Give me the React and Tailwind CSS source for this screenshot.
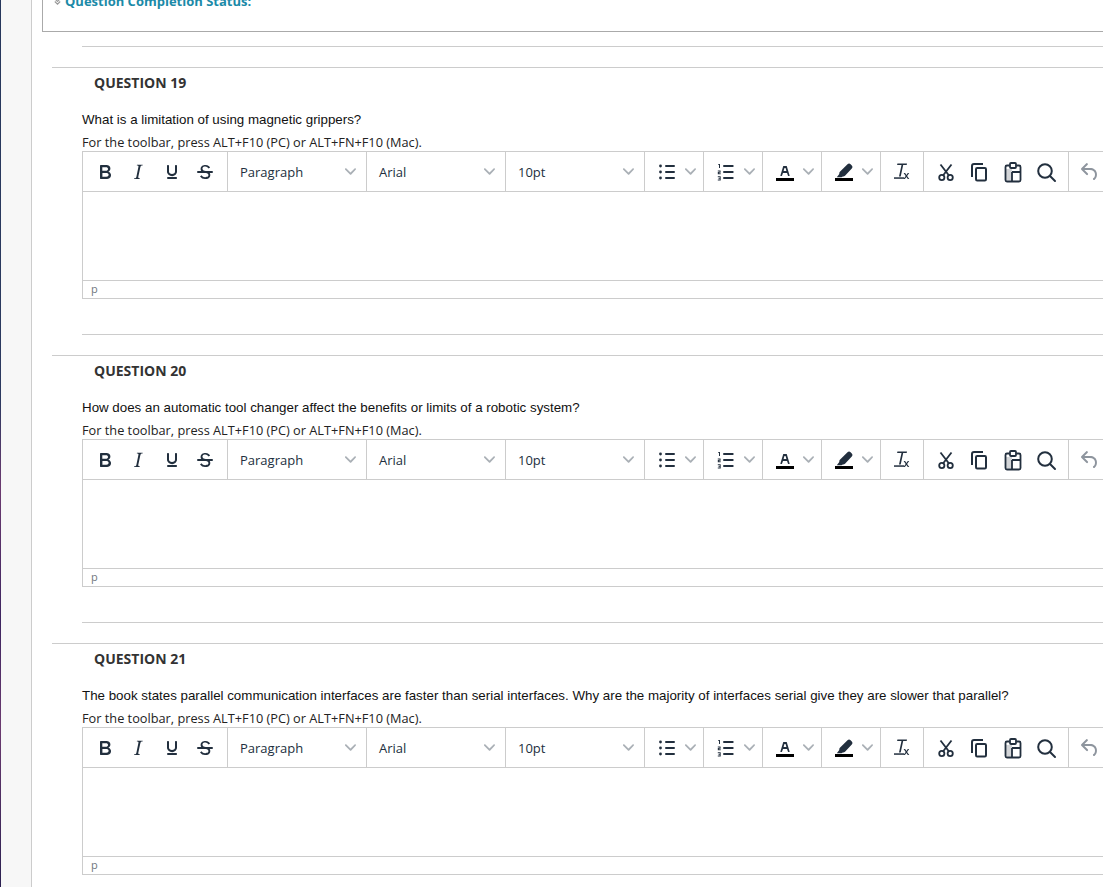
import React from 'react'

const QUESTIONS = [
  { num: 19, text: 'What is a limitation of using magnetic grippers?' },
  { num: 20, text: 'How does an automatic tool changer affect the benefits or limits of a robotic system?' },
  { num: 21, text: 'The book states parallel communication interfaces are faster than serial interfaces. Why are the majority of interfaces serial give they are slower that parallel?' },
]

function Icon({ children, className = 'text-[#222f3e]' }) {
  return (
    <svg viewBox="0 0 24 24" width="24" height="24" fill="currentColor" className={`block shrink-0 ${className}`}>
      {children}
    </svg>
  )
}

function Chevron() {
  return (
    <svg viewBox="0 0 10 10" width="11" height="11" fill="currentColor" className="block shrink-0 text-[#aab0b6]">
      <path d="M8.7 2.2c.3-.3.8-.3 1 0 .4.4.4.9 0 1.2L5.7 7.8c-.3.3-.9.3-1.2 0L.2 3.4a.8.8 0 0 1 0-1.2c.3-.3.8-.3 1.1 0L5 6l3.7-3.8z" />
    </svg>
  )
}

function IconButton({ children }) {
  return <div className="flex w-[33.5px] items-center justify-center">{children}</div>
}

function SelectBox({ label }) {
  return (
    <div className="flex w-[139px] items-center justify-between border-r border-[#ccc] pl-[12px] pr-[10px] text-[13px] text-[#222f3e] [font-family:'Open_Sans',sans-serif]">
      <span className="pt-[2px]">{label}</span>
      <Chevron />
    </div>
  )
}

function SplitButton({ children }) {
  return (
    <div className="flex w-[59px] items-center justify-between border-r border-[#ccc] pl-[9.5px] pr-[7.5px]">
      {children}
      <Chevron />
    </div>
  )
}

function Toolbar() {
  return (
    <div className="flex h-[40px] border-b border-[#ccc]">
      <div className="flex w-[145px] border-r border-[#ccc] pl-[5px]">
        <IconButton>
          <Icon><path d="M7.8 19c-.3 0-.5 0-.6-.2l-.2-.5V5.7c0-.2 0-.4.2-.5l.6-.2h5c1.5 0 2.7.3 3.5 1 .7.6 1.1 1.4 1.1 2.5a3 3 0 0 1-.6 1.9c-.4.6-1 1-1.6 1.2.4.1.9.3 1.3.6s.8.7 1 1.2c.4.4.5 1 .5 1.6 0 1.3-.4 2.3-1.3 3-.8.7-2.1 1-3.8 1H7.8zm5-8.3c.6 0 1.2-.1 1.6-.5.4-.3.6-.7.6-1.3 0-1.1-.8-1.7-2.3-1.7H9.3v3.5h3.4zm.5 6c.7 0 1.3-.1 1.7-.4.4-.4.6-.9.6-1.5s-.2-1-.7-1.4c-.4-.3-1-.4-2-.4H9.4v3.8h4z" /></Icon>
        </IconButton>
        <IconButton>
          <Icon><path d="M16.7 4.7l-.1.9h-.3c-.6 0-1 0-1.4.3-.3.3-.4.6-.5 1.1l-2.1 9.8v.6c0 .5.4.8 1.4.8h.2l-.2.8H8l.2-.8h.2c1.1 0 1.8-.5 2-1.5l2-9.8.1-.5c0-.6-.4-.8-1.4-.8h-.3l.2-.9h5.8z" /></Icon>
        </IconButton>
        <IconButton>
          <Icon><path d="M16 5c.6 0 1 .4 1 1v5.5a4 4 0 0 1-.4 1.8l-1 1.4a5.3 5.3 0 0 1-5.5 1 5 5 0 0 1-1.6-1c-.5-.4-.8-.9-1.1-1.4a4 4 0 0 1-.4-1.8V6c0-.6.4-1 1-1s1 .4 1 1v5.5c0 .3 0 .6.2 1l.6.7a3.3 3.3 0 0 0 2.2.8 3.4 3.4 0 0 0 2.2-.8c.3-.2.4-.5.6-.8l.2-.9V6c0-.6.4-1 1-1zM8 17h8c.6 0 1 .4 1 1s-.4 1-1 1H8a1 1 0 0 1 0-2z" /></Icon>
        </IconButton>
        <IconButton>
          <Icon><path d="M15.6 8.5c-.5-.7-1-1.1-1.3-1.3-.6-.4-1.3-.6-2-.6-2.7 0-2.8 1.7-2.8 2.1 0 1.6 1.8 2 3.2 2.3 4.4.9 4.6 2.8 4.6 3.9 0 1.4-.7 4.1-5 4.1A6.2 6.2 0 0 1 7 16.4l1.5-1.1c.4.6 1.6 2 3.7 2 1.6 0 2.5-.4 3-1.2.4-.8.3-2-.8-2.6-.7-.4-1.6-.7-2.9-1-1-.2-3.9-.8-3.9-3.6C7.6 6 10.3 5 12.4 5c2.9 0 4.2 1.6 4.7 2.4l-1.5 1.1z" /><path d="M5 11h14a1 1 0 0 1 0 2H5a1 1 0 0 1 0-2z" /></Icon>
        </IconButton>
      </div>
      <SelectBox label="Paragraph" />
      <SelectBox label="Arial" />
      <SelectBox label="10pt" />
      <SplitButton>
        <Icon>
          <path d="M11 5h8a1 1 0 0 1 0 2h-8a1 1 0 0 1 0-2zm0 6h8a1 1 0 0 1 0 2h-8a1 1 0 0 1 0-2zm0 6h8a1 1 0 0 1 0 2h-8a1 1 0 0 1 0-2z" />
          <circle cx="5.5" cy="6" r="1.4" /><circle cx="5.5" cy="12" r="1.4" /><circle cx="5.5" cy="18" r="1.4" />
        </Icon>
      </SplitButton>
      <SplitButton>
        <Icon>
          <path d="M10 5h8.700a1 1 0 0 1 0 2H10a1 1 0 0 1 0-2zm0 6h8.700a1 1 0 0 1 0 2H10a1 1 0 0 1 0-2zm0 6h8.700a1 1 0 0 1 0 2H10a1 1 0 0 1 0-2z" />
          <path d="M4.300 4H6v4H5V5h-.7zM3.800 10.500h2.800v2.200H4.900v.6h1.800v.9H3.800v-2.100h1.800v-.7H3.800zM3.800 16.300h2.900v4.200H3.800v-.9h1.900V19H4.500v-.7h1.200v-1.100H3.800z" />
        </Icon>
      </SplitButton>
      <SplitButton>
        <Icon>
          <path d="M3 18h18v3H3z" fill="#000" />
          <path d="M8.7 16h-.8a.5.5 0 0 1-.5-.6l2.7-9c.1-.3.3-.4.5-.4h2.8c.2 0 .4.1.5.4l2.7 9a.5.5 0 0 1-.5.6h-.8a.5.5 0 0 1-.4-.4l-.7-2.2c0-.3-.3-.4-.5-.4h-3.4c-.2 0-.4.1-.5.4l-.7 2.2c0 .3-.2.4-.4.4zm2.6-7.6l-.6 2a.5.5 0 0 0 .5.6h1.6a.5.5 0 0 0 .5-.6l-.6-2c0-.3-.3-.4-.5-.4h-.4c-.2 0-.4.1-.5.4z" />
        </Icon>
      </SplitButton>
      <SplitButton>
        <Icon>
          <path d="M3 18h18v3H3z" fill="#000" />
          <path d="M15.500 4.200a2.200 2.200 0 0 1 3.100 0l1.200 1.200a2.200 2.200 0 0 1 0 3.100l-6.800 7.200c-.6.6-1.400.8-2.200.7l-1.300.9H4.800l2.500-3.400c-.2-.8 0-1.500.6-2.100z" />
        </Icon>
      </SplitButton>
      <div className="flex w-[43px] items-center border-r border-[#ccc] pl-[10px]">
        <Icon>
          <path d="M3 17.300h10v1.500H3z" />
          <path d="M6.400 3.500H16l-.3 1.500h-3.500l-2.500 11.600H8L10.500 5H6.100z" />
          <path d="M12.600 13h1.500l1.300 2 1.400-2h1.400l-2.100 2.900 2.200 3.100h-1.500l-1.400-2.100-1.500 2.100h-1.400l2.200-3.100z" />
        </Icon>
      </div>
      <div className="flex w-[145px] border-r border-[#ccc] pl-[5px]">
        <IconButton>
          <Icon>
            <g fill="none" stroke="currentColor" strokeWidth="1.8">
              <circle cx="7.800" cy="17.500" r="2.600" />
              <circle cx="16.200" cy="17.500" r="2.600" />
              <path d="M9.200 15.300L17.500 4.500M14.800 15.300L6.500 4.500" />
            </g>
          </Icon>
        </IconButton>
        <IconButton>
          <Icon>
            <g fill="none" stroke="currentColor" strokeWidth="2">
              <path d="M16 4H7a2 2 0 0 0-2 2v11" />
              <rect x="9" y="8" width="10" height="12.500" rx="1.200" />
            </g>
          </Icon>
        </IconButton>
        <IconButton>
          <Icon>
            <rect x="5" y="9" width="6" height="11.500" opacity="0.2" />
            <g fill="none" stroke="currentColor" strokeWidth="1.8">
              <path d="M8.500 5.500H6a1.500 1.500 0 0 0-1.500 1.500v13A1.500 1.500 0 0 0 6 21.500h12a1.500 1.500 0 0 0 1.500-1.500V7A1.500 1.500 0 0 0 18 5.500h-2.500" />
              <rect x="9" y="3" width="6" height="5" rx="1" />
              <path d="M11 12h8.500M11 12v9.500" />
            </g>
          </Icon>
        </IconButton>
        <IconButton>
          <Icon>
            <g fill="none" stroke="currentColor" strokeWidth="2">
              <circle cx="11" cy="11" r="6.800" />
              <path d="M16 16L21 21" strokeLinecap="round" />
            </g>
          </Icon>
        </IconButton>
      </div>
      <div className="flex w-[40px] items-center pl-[9px]">
        <Icon className="text-[#8e959e]">
          <path d="M6.400 8H12c3.700 0 6.200 2 6.800 5.100.6 2.700-.4 5.600-2.300 6.800a1 1 0 0 1-1-1.800c1.100-.6 1.800-2.700 1.400-4.600-.5-2.100-2.100-3.500-4.900-3.500H6.400l3.300 3.300a1 1 0 1 1-1.400 1.400l-5-5a1 1 0 0 1 0-1.400l5-5a1 1 0 0 1 1.400 1.400L6.400 8z" />
        </Icon>
      </div>
    </div>
  )
}

function Question({ num, text }) {
  return (
    <section className="ml-[20px] h-[288px] border-t border-[#ccc] pt-[6px]">
      <h3 className="ml-[42px] h-[18px] text-[14px] font-bold leading-[18px] text-[#333] [font-family:'Open_Sans',sans-serif]">
        QUESTION {num}
      </h3>
      <div className="ml-[30px]">
        <p className="mt-[19px] h-[18px] text-[13.33px] leading-[18px] text-[#111] [font-family:'Liberation_Sans',sans-serif]">{text}</p>
        <p className="mt-[5px] h-[16px] text-[12.75px] leading-[16px] text-[#222] [font-family:'Open_Sans',sans-serif]">
          For the toolbar, press ALT+F10 (PC) or ALT+FN+F10 (Mac).
        </p>
        <div className="mt-[1px] w-[1100px] border border-[#ccc]">
          <Toolbar />
          <div className="h-[89px] border-b border-[#ccc]" />
          <div className="flex h-[17px] items-center pl-[8px] text-[11px] text-[#6f7780] [font-family:'Open_Sans',sans-serif]">p</div>
        </div>
        <hr className="mt-[35px] border-t border-[#ccc]" />
      </div>
    </section>
  )
}

export default function App() {
  return (
    <div className="flex h-[887px] w-[1103px] overflow-hidden bg-white">
      <div className="w-[1px] shrink-0 bg-[linear-gradient(180deg,#27375c_0%,#2c3a60_45%,#6b3a70_55%,#3d2560_70%,#6b3a70_82%,#2a2050_100%)]" />
      <div className="w-[31px] shrink-0 border-r border-[#ccc] bg-[#f7f7f7]" />
      <main className="min-w-0 flex-1">
        <div className="ml-[10px] h-[32px] w-[1100px] overflow-hidden border-b border-l border-[#aaa]">
          <div className="-mt-[8px] flex items-center gap-[3px] pl-[10px] text-[13px] font-bold leading-[18px] text-[#1c8aa8] [font-family:'Open_Sans',sans-serif]">
            <svg viewBox="0 0 10 10" width="9" height="9" className="text-[#999]" fill="none" stroke="currentColor" strokeWidth="1.2">
              <path d="M2 2l3 3 3-3M2 5l3 3 3-3" />
            </svg>
            <span>Question Completion Status:</span>
          </div>
        </div>
        <hr className="ml-[50px] mt-[14px] border-t border-[#ccc]" />
        <div className="mt-[20px]">
          {QUESTIONS.map(q => (
            <Question key={q.num} num={q.num} text={q.text} />
          ))}
        </div>
      </main>
    </div>
  )
}
